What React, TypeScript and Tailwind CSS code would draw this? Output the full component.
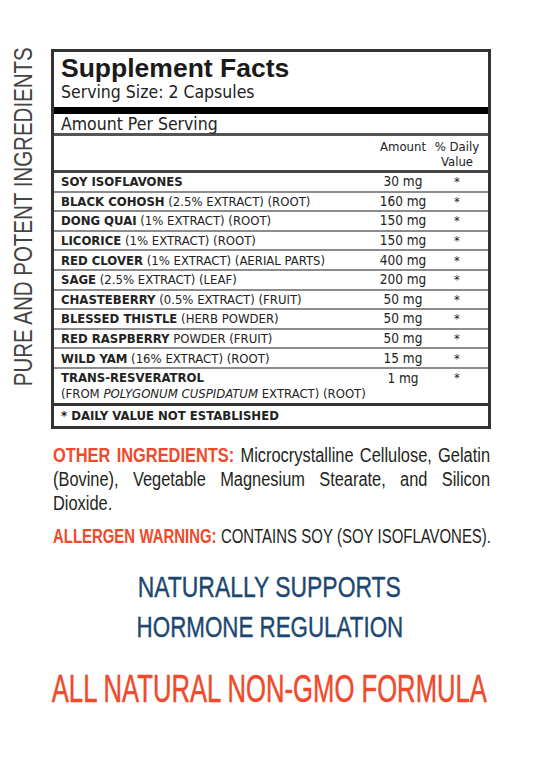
import React from "react";

const arial = "font-['Liberation_Sans',Arial,sans-serif]";
const tahoma = "font-['DejaVu_Sans_Condensed','DejaVu_Sans',sans-serif]";

const rows = [
  { name: "SOY ISOFLAVONES", rest: "", amount: "30 mg" },
  { name: "BLACK COHOSH", rest: " (2.5% EXTRACT) (ROOT)", amount: "160 mg" },
  { name: "DONG QUAI", rest: " (1% EXTRACT) (ROOT)", amount: "150 mg" },
  { name: "LICORICE", rest: " (1% EXTRACT) (ROOT)", amount: "150 mg" },
  { name: "RED CLOVER", rest: " (1% EXTRACT) (AERIAL PARTS)", amount: "400 mg" },
  { name: "SAGE", rest: " (2.5% EXTRACT) (LEAF)", amount: "200 mg" },
  { name: "CHASTEBERRY", rest: " (0.5% EXTRACT) (FRUIT)", amount: "50 mg" },
  { name: "BLESSED THISTLE", rest: " (HERB POWDER)", amount: "50 mg" },
  { name: "RED RASPBERRY", rest: " POWDER (FRUIT)", amount: "50 mg" },
  { name: "WILD YAM", rest: " (16% EXTRACT) (ROOT)", amount: "15 mg" },
];

const FactsTable = () => {
  return (
    <div className={`w-[440px] border-[3px] border-[#333] text-[#222] ${tahoma}`}>
      <div className="px-[7px] pt-[2px] pb-[5px]">
        <h1 className={`${arial} text-[26.5px] font-bold leading-[28px] text-[#1a1a1a]`}>Supplement Facts</h1>
        <p className="mt-[1px] text-[17.5px] leading-[19px]">Serving Size: 2 Capsules</p>
      </div>
      <div className="h-[7px] bg-black" />
      <div className="h-[19px] px-[7px] text-[17.5px] leading-[21px]">Amount Per Serving</div>
      <div className="h-[3px] bg-[#555]" />
      <div className="grid h-[34px] grid-cols-[1fr_52px_56px] pt-[3px] pr-[3px] text-[13px] leading-[15px]">
        <div />
        <div className="text-center">Amount</div>
        <div className="text-center">
          % Daily
          <br />
          Value
        </div>
      </div>
      <div className="h-[3px] bg-[#444]" />
      {rows.map((r) => (
        <div
          key={r.name}
          className="grid h-[19.6px] grid-cols-[1fr_52px_56px] items-center border-b-2 border-[#8c8c8c] pl-[7px] pr-[3px] text-[13px] leading-[17px]"
        >
          <div className="whitespace-nowrap">
            <span className="font-bold">{r.name}</span>
            {r.rest}
          </div>
          <div className="text-center text-[13.5px]">{r.amount}</div>
          <div className="text-center">*</div>
        </div>
      ))}
      <div className="grid h-[34px] grid-cols-[1fr_52px_56px] pl-[7px] pr-[3px] pt-px text-[13px] leading-[16px]">
        <div>
          <div className="font-bold">TRANS-RESVERATROL</div>
          <div className="whitespace-nowrap">
            (FROM <i>POLYGONUM CUSPIDATUM</i> EXTRACT) (ROOT)
          </div>
        </div>
        <div className="text-center text-[13.5px]">1 mg</div>
        <div className="text-center">*</div>
      </div>
      <div className="h-[3px] bg-[#333]" />
      <div className="h-[20px] pl-[7px] text-[13px] font-bold leading-[19px]">* DAILY VALUE NOT ESTABLISHED</div>
    </div>
  );
};

export default function App() {
  return (
    <div className="min-h-[759px] w-[539px] overflow-hidden bg-white pt-[48px]">
      <div className="flex">
        <div className="flex h-[338px] w-[51px] flex-col justify-center pl-[11px]">
          <div
            className={`rotate-180 scale-y-[0.82] whitespace-nowrap text-[25px] leading-[25px] text-[#444] [writing-mode:vertical-rl] ${arial}`}
          >
            PURE AND POTENT INGREDIENTS
          </div>
        </div>
        <div className="pt-px">
          <FactsTable />
        </div>
      </div>

      <div className={`ml-[53px] mt-[14px] text-[20px] leading-[24px] text-[#231f20] ${arial}`}>
        <div className="w-[533px] origin-left scale-x-[0.82] text-justify [text-align-last:justify]">
          <span className="font-bold text-[#ee4a2b]">OTHER INGREDIENTS:</span> Microcrystalline Cellulose, Gelatin
        </div>
        <div className="w-[533px] origin-left scale-x-[0.82] text-justify [text-align-last:justify]">
          (Bovine), Vegetable Magnesium Stearate, and Silicon
        </div>
        <div className="w-[533px] origin-left scale-x-[0.82]">Dioxide.</div>
        <div className="mt-[9px] w-[587px] origin-left scale-x-[0.746] text-justify [text-align-last:justify]">
          <span className="font-bold text-[#ee4a2b]">ALLERGEN WARNING:</span> CONTAINS SOY (SOY ISOFLAVONES).
        </div>
      </div>

      <div className={`mt-[19px] flex flex-col items-center text-[#1b4771] ${arial}`}>
        <div className="scale-x-[0.764] whitespace-nowrap text-[30px] leading-[40px] [-webkit-text-stroke:0.4px_#1b4771]">
          NATURALLY SUPPORTS
        </div>
        <div className="scale-x-[0.745] whitespace-nowrap text-[30px] leading-[40px] [-webkit-text-stroke:0.4px_#1b4771]">
          HORMONE REGULATION
        </div>
      </div>

      <div className={`mt-[20px] flex justify-center text-[#ee4a2b] ${arial}`}>
        <div className="scale-x-[0.675] whitespace-nowrap text-[38px] leading-[44px] [-webkit-text-stroke:0.5px_#ee4a2b]">
          ALL NATURAL NON-GMO FORMULA
        </div>
      </div>
    </div>
  );
}
